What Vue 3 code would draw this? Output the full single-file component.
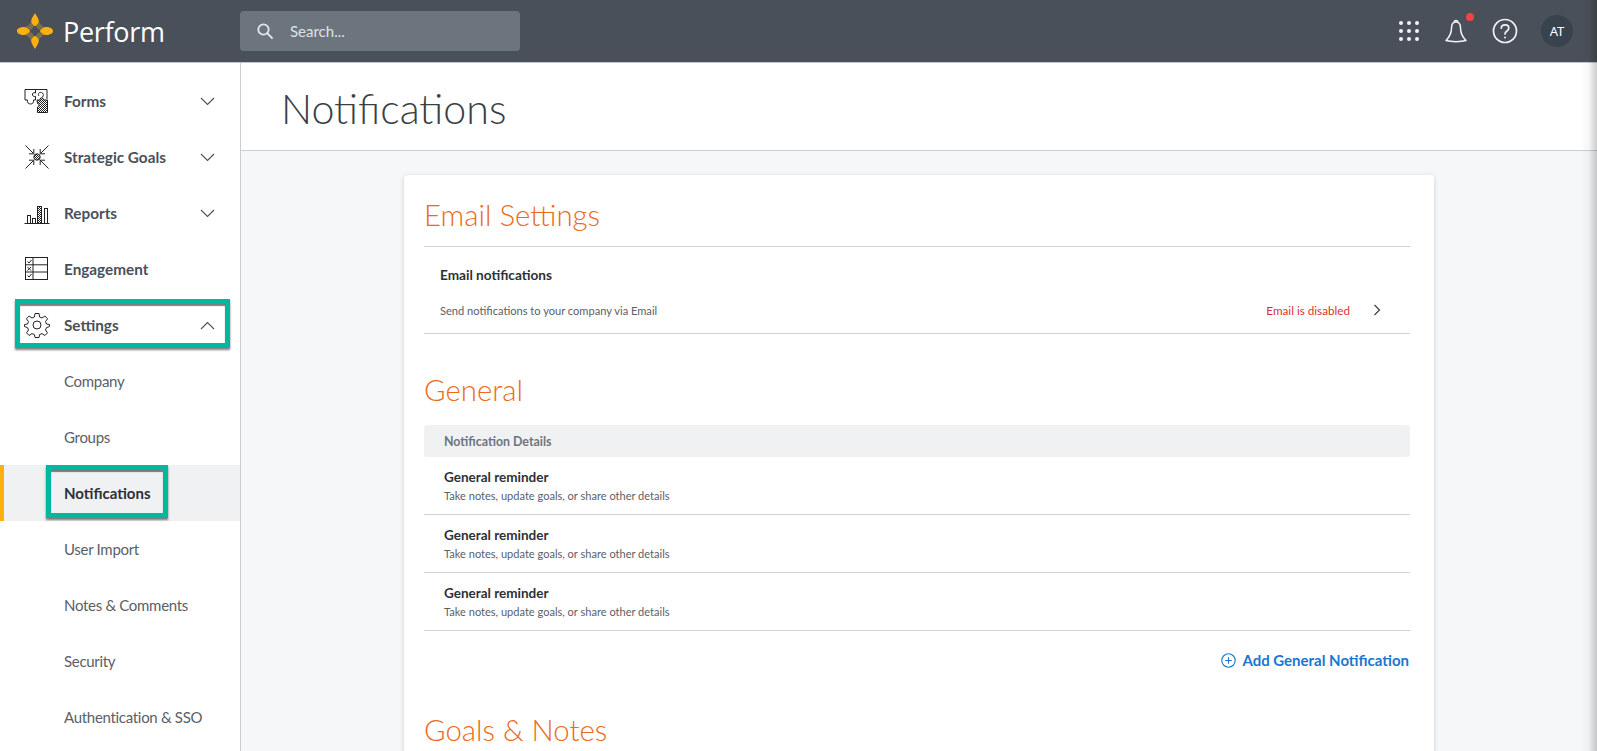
<script setup>
const navTop = [
  { label: 'Forms', icon: 'forms', chevron: 'down' },
  { label: 'Strategic Goals', icon: 'goals', chevron: 'down' },
  { label: 'Reports', icon: 'reports', chevron: 'down' },
  { label: 'Engagement', icon: 'engagement' },
  { label: 'Settings', icon: 'settings', chevron: 'up', marked: true },
]
const subItems = ['Company', 'Groups', 'Notifications', 'User Import', 'Notes & Comments', 'Security', 'Authentication & SSO']
const reminders = [1, 2, 3]
</script>

<template>
  <div class="page">
    <svg class="defs" width="0" height="0">
      <defs>
        <pattern id="stipple" width="2" height="2" patternUnits="userSpaceOnUse">
          <rect width="2" height="2" fill="#fff" />
          <rect width="1" height="1" fill="#222" />
          <rect x="1" y="1" width="1" height="1" fill="#222" />
        </pattern>
      </defs>
    </svg>
    <header class="topbar">
      <div class="brand">
        <svg class="logo" width="38" height="38" viewBox="0 0 40 40">
          <path d="M20 6C21.500 13 26.500 18.500 34 20C26.500 21.500 21.500 26.500 20 34C18.500 26.500 13.500 21.500 6 20C13.500 18.500 18.500 13 20 6Z" fill="#7d6f4c" stroke="#7d6f4c" stroke-width="5" stroke-linejoin="round" />
          <path d="M20 14.500C20.600 17 23 19.400 25.500 20C23 20.600 20.600 23 20 25.500C19.400 23 17 20.600 14.500 20C17 19.400 19.400 17 20 14.500Z" fill="#4a5059" stroke="#4a5059" stroke-width="2" stroke-linejoin="round" />
          <path d="M20 1C18.500 4 16 7 16 9.500C16 12 18 13.500 20 15C22 13.500 24 12 24 9.500C24 7 21.500 4 20 1Z" fill="#fdb00f" />
          <path d="M20 39C18.500 36 16 33 16 30.500C16 28 18 26.500 20 25C22 26.500 24 28 24 30.500C24 33 21.500 36 20 39Z" fill="#fdb00f" />
          <path d="M1 20C1 17.500 4.500 15.800 8 15.800C11 15.800 13 18 15 20C13 22 11 24.200 8 24.200C4.500 24.200 1 22.500 1 20Z" fill="#fdb00f" />
          <path d="M39 20C39 17.500 35.500 15.800 32 15.800C29 15.800 27 18 25 20C27 22 29 24.200 32 24.200C35.500 24.200 39 22.500 39 20Z" fill="#fdb00f" />
        </svg>
        <span class="brand-name">Perform</span>
      </div>
      <div class="search">
        <svg width="18" height="18" viewBox="0 0 18 18" fill="none" stroke="#e4e7ea" stroke-width="1.8">
          <circle cx="7.500" cy="7.500" r="5.200" />
          <path d="M11.400 11.400L16 16" stroke-linecap="round" />
        </svg>
        <span>Search...</span>
      </div>
      <div class="top-actions">
        <svg class="grid-icon" width="20" height="20" viewBox="0 0 20 20" fill="#f2f3f4">
          <template v-for="y in [2, 10, 18]" :key="y">
            <circle v-for="x in [2, 10, 18]" :key="x" :cx="x" :cy="y" r="2" />
          </template>
        </svg>
        <span class="bell">
          <svg width="24" height="24" viewBox="0 0 24 24" fill="none" stroke="#f2f3f4" stroke-width="1.500">
            <path d="M12 3C8.500 3 7.500 5.500 7.500 9C7.500 15 5 18.500 2 21.500C7 23 17 23 22 21.500C19 18.500 16.500 15 16.500 9C16.500 5.500 15.500 3 12 3Z" stroke-linejoin="round" />
            <path d="M10 3.300C10.300 1 13.700 1 14 3.300" />
          </svg>
          <i class="dot"></i>
        </span>
        <svg width="26" height="26" viewBox="0 0 26 26" fill="none" stroke="#f2f3f4" stroke-width="1.700">
          <circle cx="13" cy="13" r="11.500" />
          <path d="M9.300 10.200C9.500 5.800 16.800 5.900 16.800 10.200C16.800 13 13 13 13 16" stroke-linecap="round" />
          <circle cx="13" cy="19.400" r="1" fill="#f2f3f4" stroke="none" />
        </svg>
        <span class="avatar">AT</span>
      </div>
    </header>

    <div class="body">
      <aside class="sidebar">
        <div v-for="item in navTop" :key="item.label" class="nav-row">
          <svg class="nav-icon" width="26" height="26" viewBox="0 0 26 26" fill="none" stroke="#222" stroke-width="1">
            <g v-if="item.icon === 'forms'">
              <path d="M1 1.500H11.500V5C9.500 4 8 5.500 8.500 7.200C9 8.500 10.500 8.800 11.500 8.200V12H9.500C10 14.500 8.500 16 6.500 16C4.500 16 3 14.500 3.500 12H1Z" />
              <path d="M11.500 1.500H23V11" />
              <path d="M15 8C13.500 6 15 3.800 17.500 4.500C19.500 5 20 7.500 18.500 9" />
              <path d="M13 12H16C15.500 9 20 9 19.500 12H23.500V24.500H13.500V19C15.500 19.500 15.500 15 13.500 15.500Z" fill="url(#stipple)" />
            </g>
            <g v-else-if="item.icon === 'goals'">
              <circle cx="13" cy="13" r="3.200" fill="url(#stipple)" />
              <path d="M1.500 1.500L9.500 9.500M5 9.800H9.800V5M24.500 1.500L16.500 9.500M21 9.800H16.200V5M1.500 24.500L9.500 16.500M5 16.200H9.800V21M24.500 24.500L16.500 16.500M21 16.200H16.200V21" />
            </g>
            <g v-else-if="item.icon === 'reports'">
              <path d="M0.500 23.500H25.500" />
              <rect x="3.500" y="15.500" width="3" height="8" />
              <rect x="8.500" y="18.500" width="3" height="5" />
              <rect x="13.500" y="6.500" width="4" height="17" fill="url(#stipple)" />
              <rect x="20.500" y="8.500" width="3" height="15" />
            </g>
            <g v-else-if="item.icon === 'engagement'">
              <rect x="1.500" y="1.500" width="22" height="22" />
              <path d="M1.500 8.800H23.500M1.500 16H23.500M9 1.500V23.500" />
              <path d="M3.500 5.500L5 7L7.500 4M3.500 11L7 14.500M7 11L3.500 14.500M3.500 19.500L5 21L7.500 18" />
            </g>
            <g v-else>
              <circle cx="13" cy="13" r="4" />
              <path d="M11 1.500H15L15.600 5L18 6L20.900 4L23.600 6.800L21.500 9.600L22.500 12L25.600 12.600V14.500L22.500 15.600L21.500 18L23.500 20.800L20.900 23.500L18 21.600L15.600 22.600L15 25.500H11L10.400 22.600L8 21.600L5.100 23.500L2.500 20.800L4.500 18L3.500 15.600L0.400 14.500V12.600L3.500 12L4.500 9.600L2.400 6.800L5.100 4L8 6L10.400 5Z" stroke-linejoin="round" />
            </g>
          </svg>
          <span class="nav-label">{{ item.label }}</span>
          <svg v-if="item.chevron" class="chevron" width="15" height="9" viewBox="0 0 15 9" fill="none" stroke="#4a5059" stroke-width="1.100">
            <path :d="item.chevron === 'down' ? 'M1 1L7.500 7.500L14 1' : 'M1 8L7.500 1.500L14 8'" />
          </svg>
          <span v-if="item.marked" class="mark mark-settings"></span>
        </div>
        <div
          v-for="sub in subItems"
          :key="sub"
          class="sub-row"
          :class="{ active: sub === 'Notifications' }"
        >
          <span class="sub-label">
            {{ sub }}
            <span v-if="sub === 'Notifications'" class="mark mark-notifications"></span>
          </span>
        </div>
      </aside>

      <main class="main">
        <div class="title-bar">
          <h1>Notifications</h1>
        </div>
        <div class="content">
          <section class="card">
            <h2 class="first">Email Settings</h2>
            <div class="email-block">
              <div class="email-title">Email notifications</div>
              <div class="email-row">
                <span class="email-desc">Send notifications to your company via Email</span>
                <span class="disabled">Email is disabled</span>
                <svg width="8" height="12" viewBox="0 0 8 12" fill="none" stroke="#3a3f46" stroke-width="1.200">
                  <path d="M1.500 1L6.500 6L1.500 11" />
                </svg>
              </div>
            </div>

            <h2 class="general">General</h2>
            <div class="table-head">Notification Details</div>
            <div v-for="r in reminders" :key="r" class="reminder">
              <div class="rem-title">General reminder</div>
              <div class="rem-desc">Take notes, update goals, or share other details</div>
            </div>
            <div class="add-row">
              <svg width="15" height="15" viewBox="0 0 15 15" fill="none" stroke="#1976d2" stroke-width="1.100">
                <circle cx="7.500" cy="7.500" r="6.700" />
                <path d="M7.500 4.200V10.800M4.200 7.500H10.800" />
              </svg>
              <span>Add General Notification</span>
            </div>

            <h2 class="goals">Goals &amp; Notes</h2>
          </section>
        </div>
      </main>
    </div>
    <div class="edge-shade"></div>
  </div>
</template>

<style>
html, body { margin: 0; padding: 0; overflow: hidden; background: #f6f7f9; }
</style>

<style scoped>
.page {
  position: relative;
  width: 1597px;
  height: 751px;
  overflow: hidden;
  display: flex;
  flex-direction: column;
  font-family: "Lato", "Open Sans", sans-serif;
  color: #2d3035;
}
.defs { position: absolute; }
.edge-shade {
  position: absolute;
  top: 0;
  right: 0;
  bottom: 0;
  width: 17px;
  background: linear-gradient(to right, rgba(0,0,0,0), rgba(0,0,0,.03) 50%, rgba(0,0,0,.2));
  pointer-events: none;
}
.topbar {
  height: 63px;
  flex: none;
  box-sizing: border-box;
  background: #4a5059;
  border-bottom: 1px solid #c3c7cd;
  display: flex;
  align-items: center;
  padding-left: 16px;
}
.brand { width: 224px; display: flex; align-items: center; gap: 9px; }
.brand-name { color: #fff; font-size: 27px; font-family: "Open Sans", sans-serif; letter-spacing: -0.3px; }
.search {
  width: 280px;
  height: 40px;
  border-radius: 4px;
  background: #6c757d;
  display: flex;
  align-items: center;
  box-sizing: border-box;
  padding-left: 16px;
  gap: 16px;
  color: #dfe2e5;
  font-size: 15px;
}
.top-actions {
  margin-left: auto;
  display: flex;
  align-items: center;
  padding-right: 24px;
}
.grid-icon { margin-right: 25px; }
.bell { position: relative; display: flex; margin-right: 24px; }
.dot {
  position: absolute;
  top: -6px;
  left: 22px;
  width: 8px;
  height: 8px;
  border-radius: 50%;
  background: #f44347;
}
.avatar {
  margin-left: 23px;
  width: 32px;
  height: 32px;
  border-radius: 50%;
  background: #38434d;
  color: #fff;
  font-family: "Noto Sans", sans-serif;
  font-size: 13px;
  display: flex;
  align-items: center;
  justify-content: center;
}
.body { display: flex; flex: 1; min-height: 0; }
.sidebar {
  width: 241px;
  flex: none;
  box-sizing: border-box;
  background: #fff;
  border-right: 1px solid #c9ced6;
  padding-top: 10px;
}
.nav-row, .sub-row { height: 56px; position: relative; display: flex; align-items: center; box-sizing: border-box; }
.nav-row { padding-left: 24px; }
.nav-icon { flex: none; margin-right: 14px; }
.nav-label { font-size: 15.3px; font-weight: 700; color: #4a5059; }
.chevron { position: absolute; left: 200px; top: 24px; }
.sub-row { padding-left: 64px; }
.sub-label { position: relative; font-size: 15px; color: #5a6068; letter-spacing: -0.3px; }
.sub-row.active { background: #f0f1f3; border-left: 4px solid #fdb00f; padding-left: 60px; }
.sub-row.active .sub-label { font-weight: 700; color: #2d3035; letter-spacing: 0; }
.mark {
  position: absolute;
  box-sizing: border-box;
  border: 5px solid #00b8a0;
  box-shadow: 0 2px 2px rgba(0,0,0,.5), inset 0 2px 1px rgba(0,0,0,.5);
  pointer-events: none;
}
.mark-settings { left: 15px; top: 2px; width: 215px; height: 49px; }
.mark-notifications { left: -18px; top: -19px; width: 122px; height: 53px; }
.main { flex: 1; min-width: 0; display: flex; flex-direction: column; }
.title-bar {
  height: 88px;
  flex: none;
  box-sizing: border-box;
  background: #fff;
  border-bottom: 1px solid #c9ced6;
  display: flex;
  align-items: center;
  padding: 2px 0 0 40px;
}
h1 { margin: 0; font-size: 41.2px; font-weight: 300; color: #3a3f46; font-family: "Lato", sans-serif; }
.content { flex: 1; background: #f6f7f9; padding: 24px 0 0 163px; }
.card {
  width: 1030px;
  box-sizing: border-box;
  background: #fff;
  border-radius: 4px;
  box-shadow: 0 1px 5px rgba(0,0,0,.16);
  padding: 0 24px 0 20px;
  height: 700px;
}
h2 { margin: 0; font-size: 29.4px; font-weight: 300; color: #ec6a1a; font-family: "Lato", sans-serif; line-height: 36px; }
h2.first { padding-top: 22px; padding-bottom: 13px; border-bottom: 1px solid #cfd2d8; }
.email-block { border-bottom: 1px solid #cfd2d8; height: 87px; box-sizing: border-box; padding: 19px 0 0 16px; }
.email-title { font-size: 13.6px; font-weight: 700; color: #2d3035; line-height: 18px; }
.email-row { display: flex; align-items: center; margin-top: 19px; padding-right: 29px; font-size: 11.1px; }
.email-desc { color: #5a6068; flex: 1; }
.disabled { color: #dc3035; margin-right: 23px; font-size: 11.7px; }
h2.general { margin-top: 38px; }
.table-head {
  margin-top: 17px;
  height: 32px;
  background: #f0f1f3;
  border-radius: 3px;
  display: flex;
  align-items: center;
  padding-left: 20px;
  font-size: 12.4px;
  font-weight: 700;
  color: #6c757d;
}
.reminder { height: 58px; box-sizing: border-box; padding: 11px 0 0 20px; border-bottom: 1px solid #cfd2d8; }
.rem-title { font-size: 13.5px; font-weight: 700; line-height: 18px; color: #2d3035; }
.rem-desc { font-size: 11.05px; line-height: 16px; color: #5a6068; margin-top: 2px; }
.add-row {
  display: flex;
  justify-content: flex-end;
  align-items: center;
  gap: 6px;
  margin-top: 19px;
  padding-right: 1px;
  color: #1976d2;
  font-size: 15px;
  font-weight: 700;
  line-height: 20px;
}
h2.goals { margin-top: 42px; }
</style>
